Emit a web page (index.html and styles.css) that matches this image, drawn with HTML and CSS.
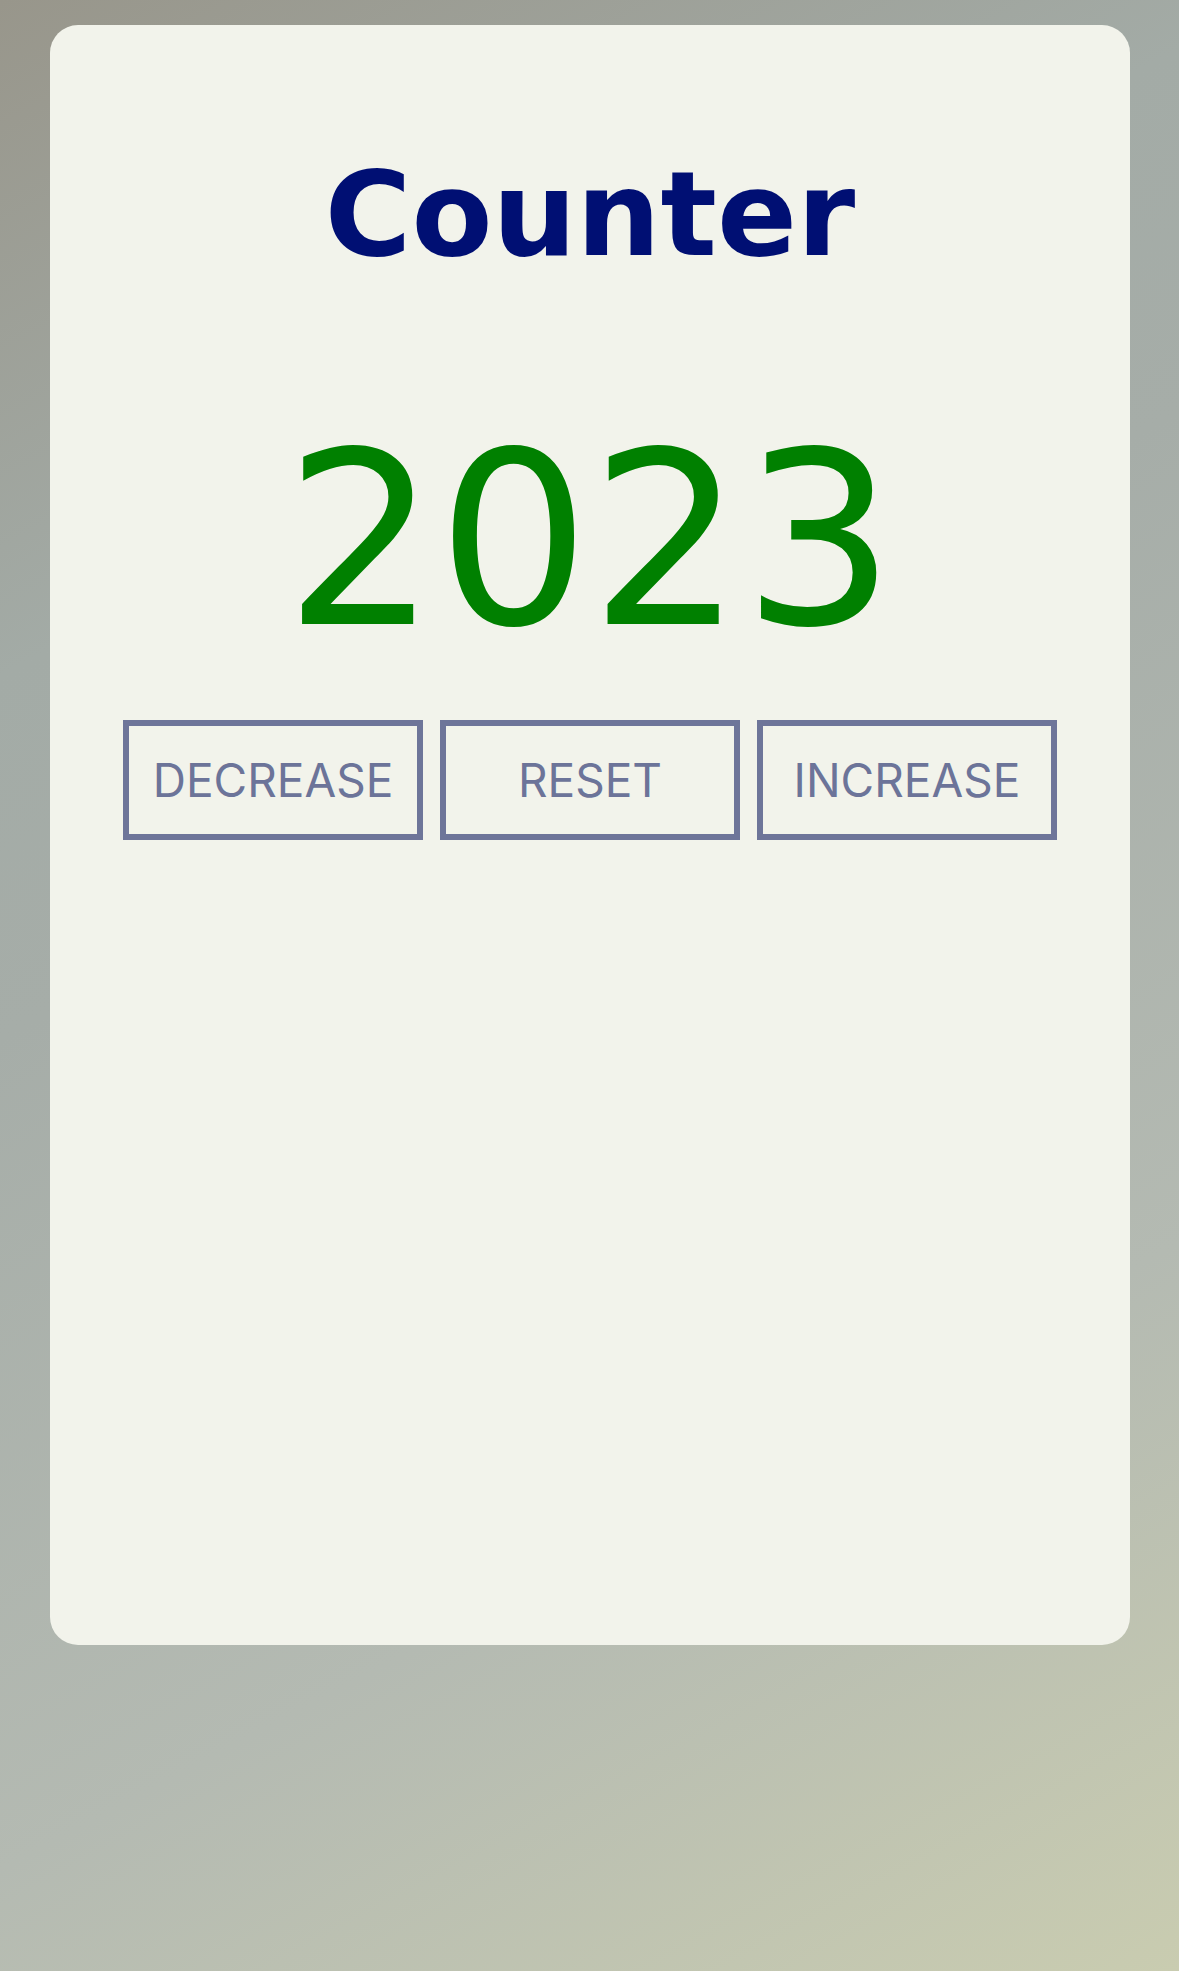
FILE: index.html
```html
<!DOCTYPE html>
<html lang="en">
<head>
<meta charset="utf-8">
<title>Counter</title>
<link rel="stylesheet" href="styles.css">
</head>
<body>
<main class="card">
  <h1 class="title">Counter</h1>
  <div class="value">2023</div>
  <div class="controls">
    <button class="btn">DECREASE</button>
    <button class="btn">RESET</button>
    <button class="btn">INCREASE</button>
  </div>
</main>
</body>
</html>
```
FILE: styles.css
```css
html, body {
  margin: 0;
  padding: 0;
}
body {
  min-height: 1971px;
  background: linear-gradient(152deg, #98968b 0%, #a3aba6 26%, #a6ada8 40%, #b4bab2 72%, #c9ccb0 100%);
  font-family: "DejaVu Sans", sans-serif;
  overflow: hidden;
}
.card {
  margin: 25px 49px 0 50px;
  height: 1620px;
  background: #f2f3eb;
  border-radius: 28px;
  display: flex;
  flex-direction: column;
  align-items: center;
  box-sizing: border-box;
  padding-top: 120px;
}
.title {
  margin: 0;
  font-family: "DejaVu Sans", sans-serif;
  font-weight: bold;
  font-size: 118px;
  color: #000f73;
}
.value {
  margin-top: 118px;
  font-family: "DejaVu Sans", sans-serif;
  font-size: 240px;
  color: #008000;
}
.controls {
  margin-top: 39px;
  display: flex;
  gap: 17px;
}
.btn {
  width: 300px;
  height: 120px;
  box-sizing: border-box;
  border: 6px solid #6e7599;
  background: transparent;
  color: #6c7499;
  font-family: "Inter", sans-serif;
  font-size: 46px;
  padding: 0;
}
```
